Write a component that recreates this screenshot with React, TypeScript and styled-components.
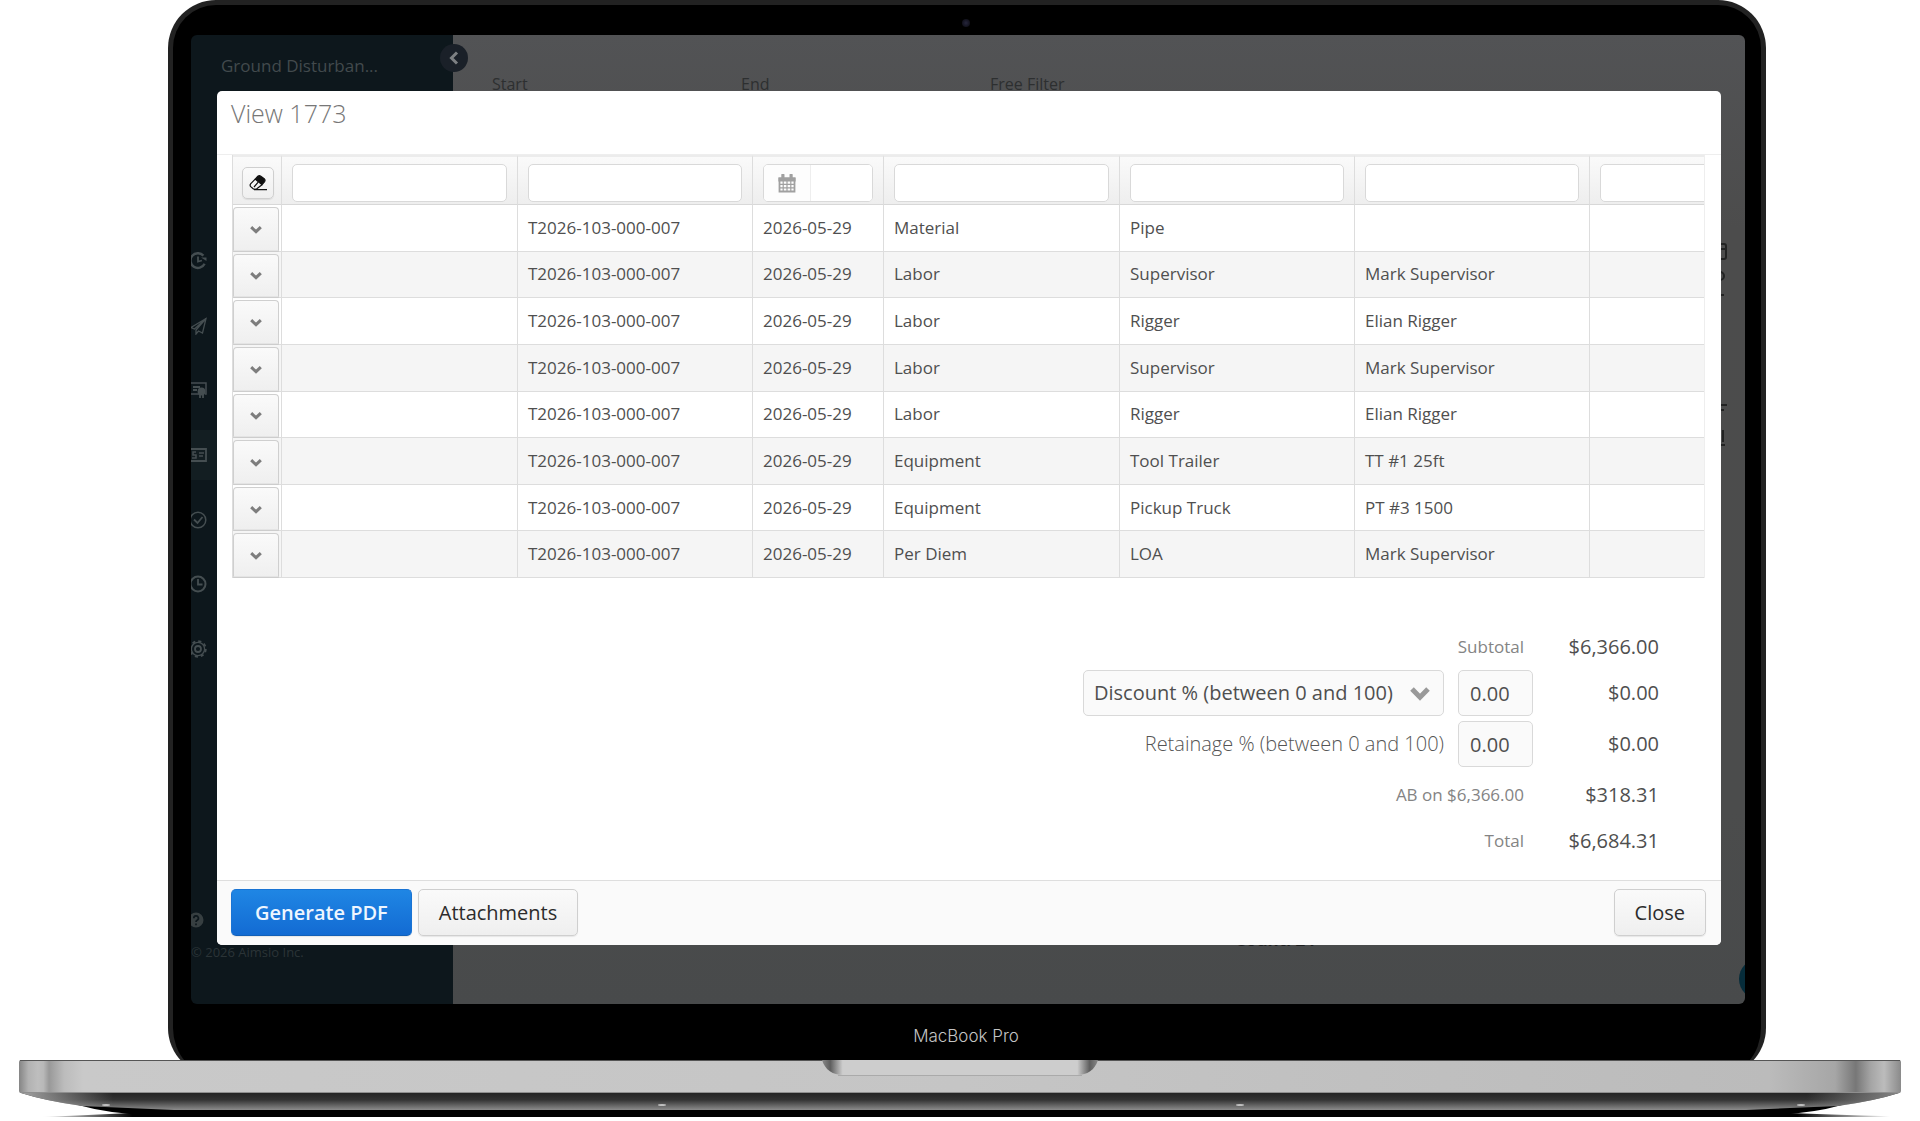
import React from "react";
import styled, { createGlobalStyle } from "styled-components";

const GlobalStyle = createGlobalStyle`
  *, *::before, *::after { box-sizing: border-box; }
  body {
    margin: 0;
    background: #fff;
    font-family: "Open Sans", "Noto Sans", sans-serif;
  }
  button, input, select { font: inherit; margin: 0; }
  h1, h2, p { margin: 0; font-weight: 400; }
`;

/* ---------- Laptop ---------- */

const Page = styled.main`
  overflow: hidden;
`;

const Lid = styled.div`
  margin: 0 154px 0 168px;
  padding: 0 16px 16px 18px;
  background: #000;
  border: 5px solid #222;
  border-bottom: 0;
  border-radius: 48px;
`;

const CameraBar = styled.div`
  height: 30px;
  display: flex;
  justify-content: center;
  align-items: center;
  padding: 6px 4px 0 0;
`;

const Camera = styled.span`
  width: 8px;
  height: 8px;
  border-radius: 50%;
  background: radial-gradient(#26263c, #08080e);
`;

const Chin = styled.div`
  height: 56px;
  display: flex;
  justify-content: center;
  align-items: center;
  padding: 8px 4px 0 0;
  color: #c4c4c4;
  font-family: Inter, Roboto, sans-serif;
  font-size: 17px;
  font-weight: 300;
  line-height: 24px;
`;

const BaseArt = styled.svg`
  display: block;
  position: relative;
  width: 100%;
  height: 61px;
  margin-top: -16px;
`;

const Screen = styled.div`
  display: grid;
  grid-template-columns: minmax(0, 1fr);
  border-radius: 6px;
  overflow: hidden;
  position: relative;
`;

/* ---------- Dimmed application ---------- */

const AppShell = styled.div`
  grid-area: 1 / 1;
  display: grid;
  grid-template-columns: 262px 1fr;
`;

const Sidebar = styled.aside`
  position: relative;
  display: flex;
  flex-direction: column;
  background: #0d171c;
  padding: 19px 0 42px;
`;

const SiteName = styled.p`
  padding-left: 30px;
  margin-bottom: 158px;
  font-size: 17px;
  line-height: 24px;
  color: #424a4d;
`;

const Nav = styled.nav`
  height: 438px;
  display: flex;
  flex-direction: column;
  justify-content: space-between;
`;

const NavLink = styled.a<{ $active?: boolean }>`
  height: 50px;
  display: flex;
  align-items: center;
  color: #454e51;
  background: ${(p) => (p.$active ? "#131e22" : "transparent")};
`;

const SidebarFoot = styled.div`
  margin-top: auto;
  display: grid;
  gap: 14px;
  font-size: 14px;
  line-height: 20px;
  color: #2b3437;
`;

const HelpLink = styled.a`
  display: flex;
  align-items: center;
  gap: 10px;
  color: inherit;
  text-decoration: none;
`;

const Copyright = styled.p`
  font-size: 13px;
`;

const CollapseButton = styled.button`
  position: absolute;
  right: -15px;
  top: 9px;
  z-index: 1;
  width: 28px;
  height: 28px;
  display: grid;
  place-items: center;
  padding: 0;
  border: 0;
  border-radius: 50%;
  background: #1a2028;
  color: #7d8083;
`;

const Content = styled.section`
  display: flex;
  flex-direction: column;
  background: linear-gradient(#525355, #4c4c4c 20%, #4b4c4c 80%, #484a4b);
  padding: 37px 17px 38px 39px;
`;

const FilterLabels = styled.div`
  display: grid;
  grid-template-columns: 249px 249px 1fr;
  font-size: 16px;
  line-height: 24px;
  color: #2d2f30;
`;

const Panel = styled.div`
  flex: 1;
  display: flex;
  flex-direction: column;
  align-items: center;
  justify-content: space-between;
  padding: 146px 0 14px;
`;

const RailArt = styled.svg`
  align-self: flex-end;
`;

const CountText = styled.p`
  padding-left: 330px;
  font-size: 17px;
  font-weight: 700;
  line-height: 24px;
  color: #1d1e1f;
`;

const ChatBubble = styled.button`
  position: absolute;
  right: -34px;
  bottom: 5px;
  width: 40px;
  height: 40px;
  border: 0;
  border-radius: 50%;
  background: #062c3a;
`;

/* ---------- Dialog ---------- */

const Overlay = styled.div`
  grid-area: 1 / 1;
  position: relative;
  z-index: 2;
  padding: 56px 24px 59px 26px;
`;

const Dialog = styled.section`
  background: #fff;
  border-radius: 5px;
  overflow: hidden;
  color: #4f4f4f;
`;

const DialogHeader = styled.header`
  height: 64px;
  padding: 0 14px;
  border-bottom: 1px solid #eee;
`;

const Title = styled.h1`
  font-size: 25px;
  font-weight: 300;
  line-height: 44px;
  color: #777;
`;

const GridFrame = styled.div`
  margin: 0 16px 0 15px;
  overflow: hidden;
  border-left: 1px solid #ddd;
  border-right: 1px solid #eee;
`;

const Grid = styled.table`
  table-layout: fixed;
  width: 1591px;
  height: 423px;
  border-collapse: separate;
  border-spacing: 0;
  font-size: 17px;
  line-height: 24px;
`;

const FilterCell = styled.th`
  height: 50px;
  padding: 5px 10px 0;
  background: linear-gradient(#fafafa, #eee);
  border-top: 2px solid #ececec;
  border-right: 1px solid #ddd;
  border-bottom: 1px solid #d8d8d8;
  font-weight: 400;
`;

const IconCell = styled(FilterCell)`
  padding: 5px 7px 0 9px;
`;

const BodyRow = styled.tr`
  &:nth-child(even) { background: #f5f5f5; }
`;

const Cell = styled.td`
  padding: 0 10px;
  border-right: 1px solid #ddd;
  border-bottom: 1px solid #ddd;
  white-space: nowrap;
`;

const MenuCell = styled(Cell)`
  height: 46px;
  padding: 2px 2px 0 0;
`;

const raised = `
  background: linear-gradient(#fafafa, #efefef);
  border: 1px solid #cfcfcf;
  box-shadow: 0 1px 1px rgba(0, 0, 0, 0.08);
`;

const RowMenuButton = styled.button`
  ${raised}
  display: grid;
  place-items: center;
  width: 100%;
  height: 100%;
  min-height: 43px;
  padding: 2px 0 0;
  border-radius: 4px 4px 0 0;
  border-bottom-color: #e4e4e4;
  color: #7d7d7d;
`;

const ClearButton = styled.button`
  ${raised}
  display: grid;
  place-items: center;
  width: 32px;
  height: 32px;
  padding: 0;
  border-radius: 5px;
  color: #111;
`;

const field = `
  border: 1px solid #d9d9d9;
  border-radius: 5px;
  background: #fff;
  color: #4f4f4f;
`;

const FilterInput = styled.input`
  ${field}
  display: block;
  width: 100%;
  height: 38px;
  padding: 0 8px;
`;

const DateField = styled.div`
  ${field}
  display: flex;
  height: 38px;
  overflow: hidden;
`;

const DateButton = styled.button`
  flex: none;
  width: 47px;
  display: grid;
  place-items: center;
  padding: 0;
  border: 0;
  border-right: 1px solid #eee;
  background: #fdfdfd;
  color: #a0a0a0;
`;

const DateInput = styled.input`
  flex: 1;
  min-width: 0;
  border: 0;
  padding: 0 8px;
  background: #fff;
`;

const Totals = styled.div`
  padding: 46px 62px 16px;
`;

const TotalRow = styled.div<{ $spaced?: boolean }>`
  display: grid;
  grid-template-columns: 1fr 75px 126px;
  align-items: center;
  height: 46px;
  margin: ${(p) => (p.$spaced ? "5px 0" : "0")};
  font-size: 20px;
  line-height: 28px;
  text-align: right;
`;

const SmallLabel = styled.span`
  grid-column: span 2;
  padding-right: 9px;
  font-size: 17px;
  color: #848484;
`;

const RateLabel = styled.label`
  padding-right: 14px;
  font-weight: 300;
  color: #555;
`;

const SelectWrap = styled.div`
  position: relative;
  justify-self: end;
  width: 361px;
  margin-right: 14px;
  color: #999;

  svg {
    position: absolute;
    right: 14px;
    top: 17px;
    pointer-events: none;
  }
`;

const KindSelect = styled.select`
  ${field}
  appearance: none;
  display: block;
  width: 100%;
  height: 46px;
  padding: 0 10px;
  background: #fafafa;
`;

const RateInput = styled.input`
  ${field}
  width: 100%;
  height: 46px;
  padding: 0 11px;
  background: #fafafa;
`;

const DialogFooter = styled.footer`
  display: flex;
  gap: 6px;
  padding: 8px 15px 9px 14px;
  border-top: 1px solid #dedede;
  background: #fafafa;
`;

const Button = styled.button`
  ${raised}
  height: 47px;
  padding: 0 20px;
  border-radius: 5px;
  font-size: 20px;
  color: #2c2c2c;

  &:last-child { margin-left: auto; }
`;

const PrimaryButton = styled(Button)`
  padding: 0 23px;
  background: linear-gradient(#1f86e4, #136bd3);
  border-color: #1a74d4;
  border-bottom-color: #1260b8;
  color: #eef6ff;
  font-weight: 600;
`;

/* ---------- Icons ---------- */

const Chevron = ({ w, h, s }: { w: number; h: number; s: number }) => (
  <svg width={w} height={h} viewBox={`0 0 ${w} ${h}`} fill="none" stroke="currentColor" strokeWidth={s} aria-hidden="true">
    <path d={`M${s / 2.5} ${s / 2.5} L${w / 2} ${h - s / 1.3} L${w - s / 2.5} ${s / 2.5}`} />
  </svg>
);

const Eraser = () => (
  <svg width="18" height="16" viewBox="0 0 18 16" fill="none" stroke="currentColor" strokeWidth="1.2" aria-hidden="true">
    <path d="M8.800 1.200 Q10.300 .2 11.800 1.200 L15.200 3.800 Q16.600 5.100 15.600 6.600 L13 9.700 L6.200 4.200z" fill="currentColor" />
    <path d="M6.200 4.200 L1.600 8.800 Q.6 10.200 1.700 11.600 L4.200 13.800 Q6 15 7.800 13.800 L13 9.700" />
    <path d="M9.200 7.200 L5 12 M5 14.600H18" />
  </svg>
);

const Calendar = () => (
  <svg width="18" height="19" viewBox="0 0 18 19" fill="none" stroke="currentColor" strokeWidth="1.2" aria-hidden="true">
    <path d="M1.5 4.5h15v13h-15z" strokeWidth="1.8" />
    <path d="M1 4h16v3H1z" fill="currentColor" />
    <path d="M4.9 1v4M13.1 1v4" strokeWidth="3.2" strokeLinecap="round" />
    <path d="M5.2 7v10M9 7v10M12.8 7v10M1 10.4h16M1 13.9h16" />
  </svg>
);

const NavIcon = ({ children }: { children: React.ReactNode }) => (
  <svg width="16" height="18" viewBox="2 0 16 18" fill="none" stroke="currentColor" strokeWidth="1.8" aria-hidden="true">
    {children}
  </svg>
);

const navItems = [
  { name: "History", icon: <><path d="M15.6 11.8A7.4 7.4 0 1 1 14.4 3.6" strokeWidth="2.4" /><path d="M9 4.500V9.500l4-1" /><path d="M12 5.500h5.500V9z" fill="currentColor" stroke="none" /></> },
  { name: "Dispatch", icon: <path d="M17 1.500 2 10.500l3.500 1.500L17 1.500 7 13v4l2.500-3 4 2z" strokeWidth="1.3" /> },
  { name: "Certificates", icon: <><path d="M10 13H1V2h16v11h-1" strokeWidth="1.5" /><path d="M4 6h7M4 9h4" /><circle cx="12.500" cy="10.500" r="3" fill="currentColor" /><path d="M11 13v4M14 13v4" /></> },
  { name: "Billing", icon: <><path d="M1 3h16v12H1z" /><path d="M7 6H4v3h3v3H3M10 7h5M10 10h4" strokeWidth="1.5" /></>, active: true },
  { name: "Approvals", icon: <><circle cx="9" cy="9" r="7.800" strokeWidth="1.500" /><path d="m5 8.500 3.500 3.500 5-6" /></> },
  { name: "Time", icon: <><circle cx="9" cy="9" r="7.500" strokeWidth="2" /><path d="M9 4v5.500h4.500" /></> },
  { name: "Settings", icon: <><circle cx="9" cy="9" r="3" /><circle cx="9" cy="9" r="6.600" strokeWidth="1.300" /><circle cx="9" cy="9" r="7.800" strokeDasharray="3.1 3.03" strokeWidth="1.800" /></> },
];

const HelpIcon = () => (
  <svg width="13" height="16" viewBox="3 0 13 16" fill="none" aria-hidden="true">
    <circle cx="8" cy="8" r="7.500" fill="#373f41" />
    <path d="M5.800 6.200a2.300 2.300 0 1 1 3.300 2Q8 8.800 8 10M8 11.500v1.800" stroke="#0d171c" strokeWidth="1.700" />
  </svg>
);

const ContentRail = () => (
  <RailArt width="24" height="212" viewBox="0 0 24 212" fill="none" stroke="#222323" strokeWidth="2" aria-hidden="true">
    <rect x="5" y="2" width="17" height="15" rx="2" />
    <path d="M5 7h17" />
    <circle cx="16" cy="34" r="4" />
    <path d="M14 53h6M12 163h11M14 168h6M19 188v12M16 203h5" />
  </RailArt>
);

const LaptopBase = () => (
  <BaseArt viewBox="0 0 1920 61" preserveAspectRatio="none" aria-hidden="true">
    <defs>
      <linearGradient id="slab" gradientUnits="userSpaceOnUse" x1="19" y1="0" x2="1901" y2="0">
        <stop offset="0" stopColor="#858585" />
        <stop offset=".005" stopColor="#b2b2b2" />
        <stop offset=".010" stopColor="#bebebe" />
        <stop offset=".013" stopColor="#b8b8b8" />
        <stop offset=".016" stopColor="#999" />
        <stop offset=".024" stopColor="#bcbcbc" />
        <stop offset=".034" stopColor="#c9c9c9" />
        <stop offset=".5" stopColor="#c5c5c5" />
        <stop offset=".93" stopColor="#bbb" />
        <stop offset=".965" stopColor="#a6a6a6" />
        <stop offset=".976" stopColor="#777" />
        <stop offset=".984" stopColor="#a5a5a5" />
        <stop offset=".991" stopColor="#bcbcbc" />
        <stop offset="1" stopColor="#8a8a8a" />
      </linearGradient>
      <linearGradient id="under" x1="0" y1="0" x2="0" y2="1">
        <stop offset="0" stopColor="#242424" />
        <stop offset=".4" stopColor="#333" />
        <stop offset="1" stopColor="#8c8c8c" />
      </linearGradient>
      <linearGradient id="shade" gradientUnits="userSpaceOnUse" x1="40" y1="0" x2="1890" y2="0">
        <stop offset="0" stopColor="#000" stopOpacity="0" />
        <stop offset=".05" stopColor="#000" />
        <stop offset=".95" stopColor="#000" />
        <stop offset="1" stopColor="#000" stopOpacity="0" />
      </linearGradient>
      <linearGradient id="rimFade" gradientUnits="userSpaceOnUse" x1="19" y1="0" x2="1901" y2="0">
        <stop offset="0" stopColor="#a5a5a5" />
        <stop offset=".05" stopColor="#a5a5a5" stopOpacity="0" />
        <stop offset=".95" stopColor="#888" stopOpacity="0" />
        <stop offset="1" stopColor="#888" />
      </linearGradient>
      <linearGradient id="notch" gradientUnits="userSpaceOnUse" x1="822" y1="0" x2="1098" y2="0">
        <stop offset="0" stopColor="#888" />
        <stop offset=".03" stopColor="#5e5e5e" />
        <stop offset=".075" stopColor="#cdcdcd" />
        <stop offset=".925" stopColor="#cdcdcd" />
        <stop offset=".97" stopColor="#5e5e5e" />
        <stop offset="1" stopColor="#888" />
      </linearGradient>
    </defs>
    <path d="M42 57 Q90 55 130 53 H1790 Q1840 55 1918 57z" fill="url(#shade)" />
    <path d="M78 45 Q110 54 150 55 H1770 Q1810 54 1842 45z" fill="#000" />
    <path d="M21 33 Q46 41 82 46 L174 50 H1746 L1838 46 Q1874 41 1899 33z" fill="url(#under)" />
    <path d="M21 33 Q46 41 82 46 L174 50 H1746 L1838 46 Q1874 41 1899 33z" fill="url(#rimFade)" />
    <path d="M19 2 Q19 0 21 0 H1899 Q1901 0 1901 2 V31 Q1901 33 1899 33 H21 Q19 33 19 31z" fill="url(#slab)" />
    <path d="M20 .5H1900" stroke="#555" />
    <path d="M20 32.500H1900" stroke="#8f8f8f" />
    <path d="M822 0 C825 10 833 15 843 15 H1077 C1087 15 1095 10 1098 0z" fill="url(#notch)" />
    <path d="M838 15.500H1082" stroke="#aaa" />
    {[106, 662, 1240, 1801].map((x) => (
      <ellipse key={x} cx={x} cy="45" rx="4" ry="1" fill="#c0c0c0" />
    ))}
  </BaseArt>
);

/* ---------- Data ---------- */

const rows = [
  ["Material", "Pipe", ""],
  ["Labor", "Supervisor", "Mark Supervisor"],
  ["Labor", "Rigger", "Elian Rigger"],
  ["Labor", "Supervisor", "Mark Supervisor"],
  ["Labor", "Rigger", "Elian Rigger"],
  ["Equipment", "Tool Trailer", "TT #1 25ft"],
  ["Equipment", "Pickup Truck", "PT #3 1500"],
  ["Per Diem", "LOA", "Mark Supervisor"],
];

const colWidths = [49, 236, 235, 131, 236, 235, 235, 234];

const TextFilter = ({ label }: { label: string }) => (
  <FilterCell>
    <FilterInput type="text" aria-label={label} />
  </FilterCell>
);

export default function App() {
  return (
    <Page>
      <GlobalStyle />
      <Lid>
        <CameraBar>
          <Camera />
        </CameraBar>
        <Screen>
          <AppShell>
            <Sidebar>
              <SiteName>Ground Disturban...</SiteName>
              <CollapseButton aria-label="Collapse menu">
                <svg width="10" height="14" viewBox="0 0 10 14" fill="none" stroke="currentColor" strokeWidth="3" aria-hidden="true">
                  <path d="M8 1.500 2.500 7 8 12.500" />
                </svg>
              </CollapseButton>
              <Nav>
                {navItems.map((item) => (
                  <NavLink key={item.name} href="#" aria-label={item.name} $active={item.active}>
                    <NavIcon>{item.icon}</NavIcon>
                  </NavLink>
                ))}
              </Nav>
              <SidebarFoot>
                <HelpLink href="#" aria-label="Help">
                  <HelpIcon />
                </HelpLink>
                <Copyright>© 2026 Aimsio Inc.</Copyright>
              </SidebarFoot>
            </Sidebar>
            <Content>
              <FilterLabels>
                <span>Start</span>
                <span>End</span>
                <span>Free Filter</span>
              </FilterLabels>
              <Panel>
                <ContentRail />
                <CountText>Count: 24</CountText>
              </Panel>
            </Content>
          </AppShell>
          <ChatBubble aria-label="Chat" />
          <Overlay>
            <Dialog role="dialog" aria-labelledby="dialog-title">
              <DialogHeader>
                <Title id="dialog-title">View 1773</Title>
              </DialogHeader>
              <GridFrame>
                <Grid>
                  <colgroup>
                    {colWidths.map((w, i) => (
                      <col key={i} width={w} />
                    ))}
                  </colgroup>
                  <thead>
                    <tr>
                      <IconCell>
                        <ClearButton aria-label="Clear filters">
                          <Eraser />
                        </ClearButton>
                      </IconCell>
                      <TextFilter label="Filter description" />
                      <TextFilter label="Filter ticket" />
                      <FilterCell>
                        <DateField>
                          <DateButton aria-label="Pick a date">
                            <Calendar />
                          </DateButton>
                          <DateInput type="text" aria-label="Filter date" />
                        </DateField>
                      </FilterCell>
                      <TextFilter label="Filter category" />
                      <TextFilter label="Filter item" />
                      <TextFilter label="Filter resource" />
                      <TextFilter label="Filter notes" />
                    </tr>
                  </thead>
                  <tbody>
                    {rows.map(([category, item, resource], i) => (
                      <BodyRow key={i}>
                        <MenuCell>
                          <RowMenuButton aria-label="Row actions">
                            <Chevron w={12} h={8} s={3} />
                          </RowMenuButton>
                        </MenuCell>
                        <Cell />
                        <Cell>T2026-103-000-007</Cell>
                        <Cell>2026-05-29</Cell>
                        <Cell>{category}</Cell>
                        <Cell>{item}</Cell>
                        <Cell>{resource}</Cell>
                        <Cell />
                      </BodyRow>
                    ))}
                  </tbody>
                </Grid>
              </GridFrame>
              <Totals>
                <TotalRow>
                  <SmallLabel>Subtotal</SmallLabel>
                  <span>$6,366.00</span>
                </TotalRow>
                <TotalRow>
                  <SelectWrap>
                    <KindSelect aria-label="Adjustment type">
                      <option>Discount % (between 0 and 100)</option>
                    </KindSelect>
                    <Chevron w={20} h={14} s={5} />
                  </SelectWrap>
                  <RateInput type="text" defaultValue="0.00" aria-label="Discount" />
                  <span>$0.00</span>
                </TotalRow>
                <TotalRow $spaced>
                  <RateLabel htmlFor="retainage">Retainage % (between 0 and 100)</RateLabel>
                  <RateInput id="retainage" type="text" defaultValue="0.00" />
                  <span>$0.00</span>
                </TotalRow>
                <TotalRow>
                  <SmallLabel>AB on $6,366.00</SmallLabel>
                  <span>$318.31</span>
                </TotalRow>
                <TotalRow>
                  <SmallLabel>Total</SmallLabel>
                  <span>$6,684.31</span>
                </TotalRow>
              </Totals>
              <DialogFooter>
                <PrimaryButton>Generate PDF</PrimaryButton>
                <Button>Attachments</Button>
                <Button>Close</Button>
              </DialogFooter>
            </Dialog>
          </Overlay>
        </Screen>
        <Chin>MacBook Pro</Chin>
      </Lid>
      <LaptopBase />
    </Page>
  );
}
